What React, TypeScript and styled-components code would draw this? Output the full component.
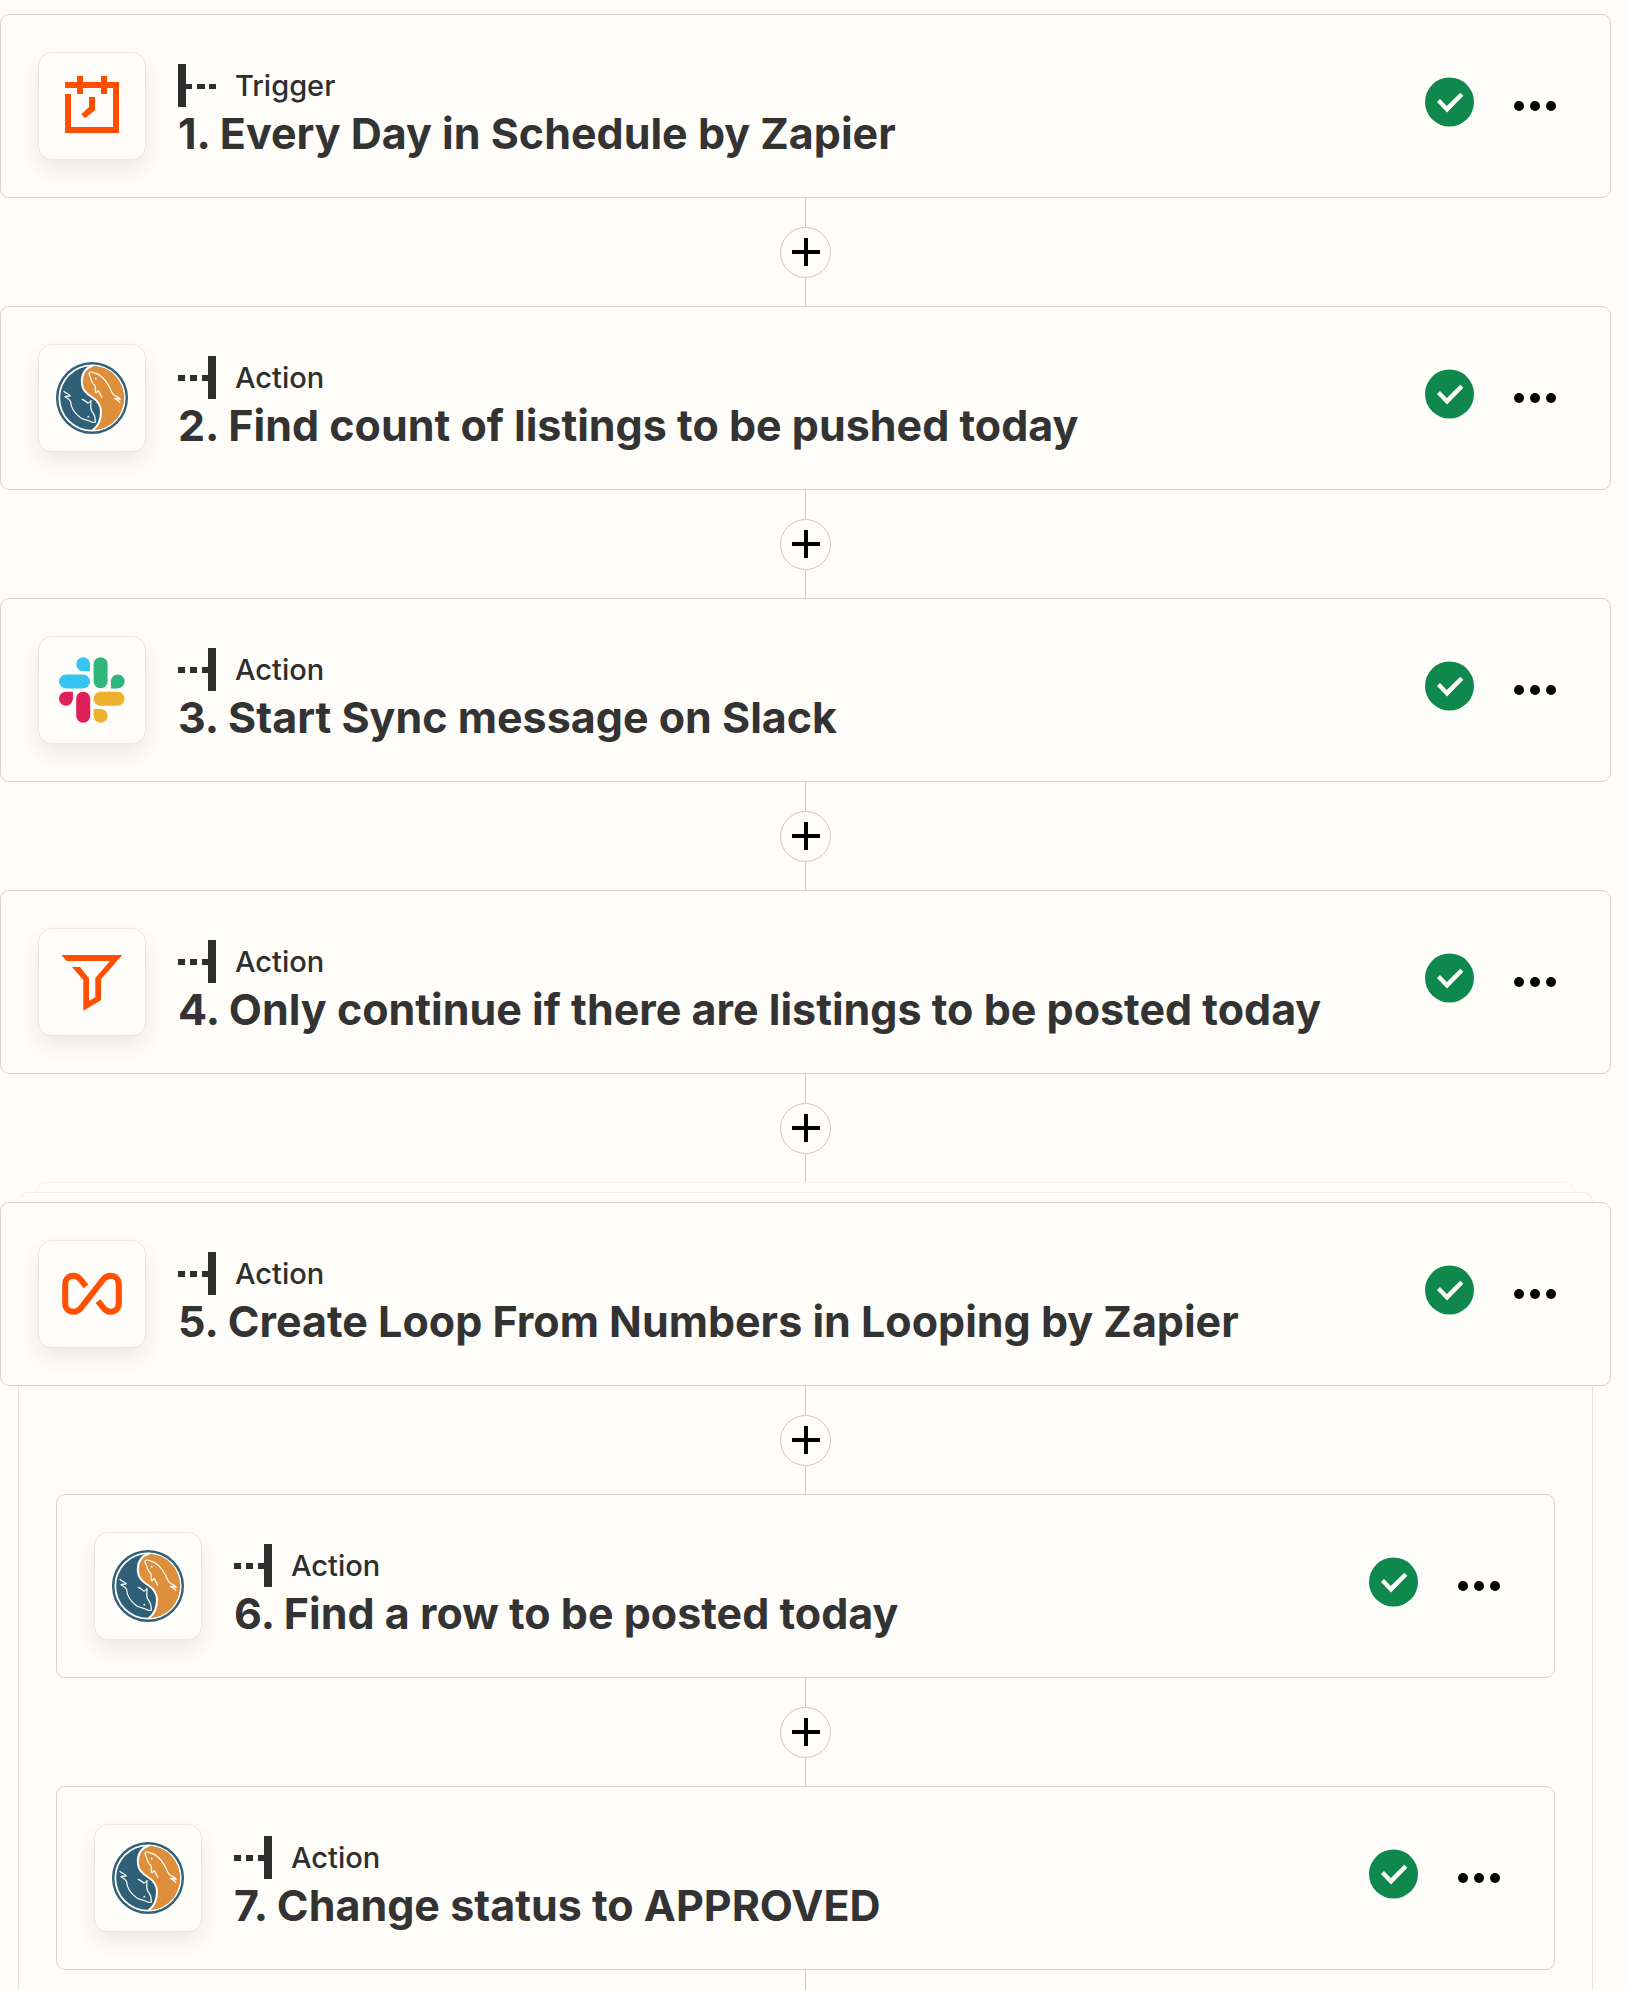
import React from "react";
import styled, { createGlobalStyle } from "styled-components";

const GlobalStyle = createGlobalStyle`
  *, *::before, *::after { box-sizing: border-box; }
  body {
    margin: 0;
    background: #fffdf9;
    color: #2d2e2e;
    font-family: Inter, "Liberation Sans", sans-serif;
    -webkit-font-smoothing: antialiased;
  }
  h2, p { margin: 0; }
  button {
    padding: 0;
    font: inherit;
    cursor: pointer;
  }
  svg { display: block; flex: none; }
`;

const Page = styled.main`
  display: flex;
  flex-direction: column;
  min-height: 100vh;
  padding: 14px 17px 0 0;
`;

const Card = styled.article`
  display: flex;
  align-items: center;
  gap: 32px;
  padding: 37px;
  border: 1px solid #d3d3d0;
  border-radius: 9px;
  background: #fffdf9;
`;

const Tile = styled.div`
  display: flex;
  flex: none;
  align-items: center;
  justify-content: center;
  width: 108px;
  height: 108px;
  border: 1px solid #e8e7e4;
  border-radius: 14px;
  background: #fffdf9;
  box-shadow: 0 10px 20px rgba(45, 46, 46, 0.09);
`;

const Details = styled.div`
  flex: 1;
  align-self: flex-start;
  min-width: 0;
  padding-top: 12px;
`;

const Kind = styled.p`
  display: flex;
  align-items: center;
  gap: 19px;
  font-size: 29px;
  font-weight: 500;
  line-height: 42px;
`;

const Title = styled.h2`
  color: #333;
  font-size: 43px;
  font-weight: 650;
  line-height: 52px;
`;

const Controls = styled.div`
  display: flex;
  flex: none;
  align-items: center;
  gap: 22px;
`;

const Status = styled.span`
  padding-bottom: 8px;
`;

const MenuButton = styled.button`
  display: flex;
  align-items: center;
  justify-content: center;
  width: 76px;
  height: 76px;
  border: 0;
  background: none;
  color: #000;
`;

const Connector = styled.div`
  display: flex;
  flex-direction: column;
  align-items: center;
  height: 108px;
`;

const Line = styled.span`
  flex: 1;
  align-self: center;
  width: 1px;
  background: #c8c8c6;
`;

const AddButton = styled.button`
  display: flex;
  flex: none;
  align-items: center;
  justify-content: center;
  width: 51px;
  height: 51px;
  border: 1px solid #c8c8c6;
  border-radius: 50%;
  background: #fffdf9;
  color: #000;
`;

const StackEdge = styled.div<{ $inset: number; $color: string }>`
  height: 10px;
  margin: 0 ${(p) => p.$inset}px;
  border: 1px solid ${(p) => p.$color};
  border-bottom: 0;
  border-radius: 10px 10px 0 0;
`;

const LoopBody = styled.section`
  display: flex;
  flex: 1;
  flex-direction: column;
  margin: 0 18px;
  padding: 0 37px;
  border: solid #e5e4e1;
  border-width: 0 1px;
`;

type App = "schedule" | "mysql" | "slack" | "filter" | "loop";

interface StepData {
  kind: "Trigger" | "Action";
  title: string;
  app: App;
}

const steps: StepData[] = [
  { kind: "Trigger", title: "1. Every Day in Schedule by Zapier", app: "schedule" },
  { kind: "Action", title: "2. Find count of listings to be pushed today", app: "mysql" },
  { kind: "Action", title: "3. Start Sync message on Slack", app: "slack" },
  { kind: "Action", title: "4. Only continue if there are listings to be posted today", app: "filter" },
];

const loopStep: StepData = {
  kind: "Action",
  title: "5. Create Loop From Numbers in Looping by Zapier",
  app: "loop",
};

const loopSteps: StepData[] = [
  { kind: "Action", title: "6. Find a row to be posted today", app: "mysql" },
  { kind: "Action", title: "7. Change status to APPROVED", app: "mysql" },
];

const ScheduleIcon = () => (
  <g fill="#ff4f00">
    <path d="M9 12H21V6H27V12H45V6H51V12H63V63H9V24H15V57H57V18H51V24H45V18H27V24H21V18H9Z" />
    <path d="M33 27H39V40.3L29 48.3L25.3 44.3L33 37Z" />
  </g>
);

const MysqlIcon = () => (
  <g>
    <circle cx="36" cy="36" r="34.8" fill="#fffdf9" stroke="#2f6077" strokeWidth="2.4" />
    <circle cx="36" cy="36" r="31.8" fill="#2f6077" />
    <path
      d="M38 4.3C30 6 25.8 12 25.8 19.5C25.8 28 31 32 36.5 35.5C42 39 45 43.5 45 50C45 58 42.5 63 37.5 67.8C55 67.5 67.8 53.5 67.8 36C67.8 18 54 4 38 4.3Z"
      fill="#dd8f3b"
    />
    <g fill="none" stroke="#fffdf9" strokeLinecap="round" strokeLinejoin="round">
      <path
        d="M37 3.5C29.5 6 25.8 12 25.8 19.5C25.8 28 31 32 36.5 35.5C42 39 45 43.5 45 50C45 58 42 64 37 68"
        strokeWidth="2"
      />
      <g strokeWidth="1.2">
        <path d="M45.7 35.3C44.5 33 43.5 30 42 28.5L40 31C38.5 28.5 39.5 26 39 23.5C36 21.5 35.3 18.5 34.5 15.5L32.8 11.5C33.5 9.5 36 9.8 38 10.8C46 12.5 50 18.5 53.3 24.7C55 28 55.5 31.5 58.5 33.5C61 34.5 63 35 64.3 37.3C62 37 60.5 36.5 58.5 36.5C60.5 38 63 38.5 63.8 40.5" />
        <path d="M8 29.3C10 31.5 12.5 31.5 14.3 33.8C12.5 34.3 11 34 9 34.5C11 36.5 13.5 36.5 14.6 39.5C15 46 19.5 52 24.5 55.7C29 58.5 33 57.8 36.5 60.5L39.3 60.2C39.5 56 38.5 52.5 36 49.5C33.5 46 35.3 42 35 38.5C34 39.5 33.5 41 32 41.2C30.5 40 28.5 37.8 26.3 37.3" />
      </g>
    </g>
    <g fill="#fffdf9">
      <circle cx="39.7" cy="16.7" r="0.9" />
      <circle cx="32.3" cy="54.7" r="0.9" />
    </g>
  </g>
);

const SlackIcon = () => (
  <g>
    <g fill="#36c5f0">
      <path d="M27.2 3.3A6.9 6.9 0 0 1 34 10.2V17.2H27.2A6.95 6.95 0 0 1 27.2 3.3Z" />
      <rect x="3" y="20.4" width="31" height="14" rx="7" />
    </g>
    <g fill="#2eb67d">
      <rect x="37.6" y="3.3" width="14" height="31" rx="7" />
      <path d="M54.9 34.4V27.4A6.9 7 0 1 1 61.8 34.4Z" />
    </g>
    <g fill="#e01e5a">
      <path d="M16.9 37.7V44.7A6.95 7 0 1 1 10 37.7Z" />
      <rect x="20.2" y="37.7" width="14" height="31" rx="7" />
    </g>
    <g fill="#ecb22e">
      <rect x="37.6" y="37.7" width="31" height="14" rx="7" />
      <path d="M37.6 55H44.6A7 6.9 0 1 1 37.6 61.8Z" />
    </g>
  </g>
);

const FilterIcon = () => (
  <path
    d="M5.3 9H66.3L45 33.3V54.3L27.3 64.7V34L16 21H24L33 32.3V55L39.3 51.3V32L54 15H10.7Z"
    fill="#ff4f00"
  />
);

const LoopIcon = () => (
  <path
    d="M30 28.3L24.6 21.6C22.5 19 20.8 17.8 17.5 17.8C12.8 17.8 9.2 21 9.2 26.5V45C9.2 50.5 12.8 53.8 17.5 53.8C20.8 53.8 22.8 52.6 24.8 50.2L47.2 21.4C49.2 19 51.2 17.8 54.5 17.8C59.2 17.8 62.8 21 62.8 26.5V45C62.8 50.5 59.2 53.8 54.5 53.8C51.2 53.8 49.5 52.6 47.6 50.2L42 43.2"
    fill="none"
    stroke="#ff4f00"
    strokeWidth="6"
  />
);

const appIcons: Record<App, React.FC> = {
  schedule: ScheduleIcon,
  mysql: MysqlIcon,
  slack: SlackIcon,
  filter: FilterIcon,
  loop: LoopIcon,
};

const KindIcon = ({ kind }: { kind: StepData["kind"] }) => (
  <svg width="38" height="43" viewBox="0 0 38 43" fill="#2d2e2e" aria-hidden="true">
    {kind === "Trigger" ? (
      <path d="M0 0H8V43H0ZM8 20H14V25H8ZM19 20H27V25H19ZM31 20H38V25H31Z" />
    ) : (
      <path d="M30 0H38V43H30ZM24 19H30V25H24ZM12 19H19V25H12ZM0 19H7V25H0Z" />
    )}
  </svg>
);

const Step = ({ kind, title, app }: StepData) => {
  const Icon = appIcons[app];
  return (
    <Card>
      <Tile>
        <svg width="72" height="72" viewBox="0 0 72 72" aria-hidden="true">
          <Icon />
        </svg>
      </Tile>
      <Details>
        <Kind>
          <KindIcon kind={kind} />
          {kind}
        </Kind>
        <Title>{title}</Title>
      </Details>
      <Controls>
        <Status role="img" aria-label="Step complete">
          <svg width="50" height="50" viewBox="0 0 50 50">
            <circle cx="24.5" cy="25" r="24.5" fill="#0f884e" />
            <path d="M12 25L15 22L21.8 29L35.3 15.8L38.3 18.8L22 35.5Z" fill="#fffdf9" />
          </svg>
        </Status>
        <MenuButton type="button" aria-label="Step options">
          <svg width="42" height="10" viewBox="0 0 42 10" fill="currentColor">
            <circle cx="5" cy="5" r="5" />
            <circle cx="21" cy="5" r="5" />
            <circle cx="37" cy="5" r="5" />
          </svg>
        </MenuButton>
      </Controls>
    </Card>
  );
};

const AddStep = () => (
  <Connector>
    <Line />
    <AddButton type="button" aria-label="Add step">
      <svg width="28" height="28" viewBox="0 0 28 28" fill="currentColor">
        <path d="M12 0H16V12H28V16H16V28H12V16H0V12H12Z" />
      </svg>
    </AddButton>
    <Line />
  </Connector>
);

export default function App() {
  return (
    <>
      <GlobalStyle />
      <Page>
        {steps.map((step) => (
          <React.Fragment key={step.title}>
            <Step {...step} />
            <AddStep />
          </React.Fragment>
        ))}
        <StackEdge $inset={36} $color="#f5f3f0" />
        <StackEdge $inset={18} $color="#eeece9" />
        <Step {...loopStep} />
        <LoopBody>
          {loopSteps.map((step) => (
            <React.Fragment key={step.title}>
              <AddStep />
              <Step {...step} />
            </React.Fragment>
          ))}
          <Line />
        </LoopBody>
      </Page>
    </>
  );
}
